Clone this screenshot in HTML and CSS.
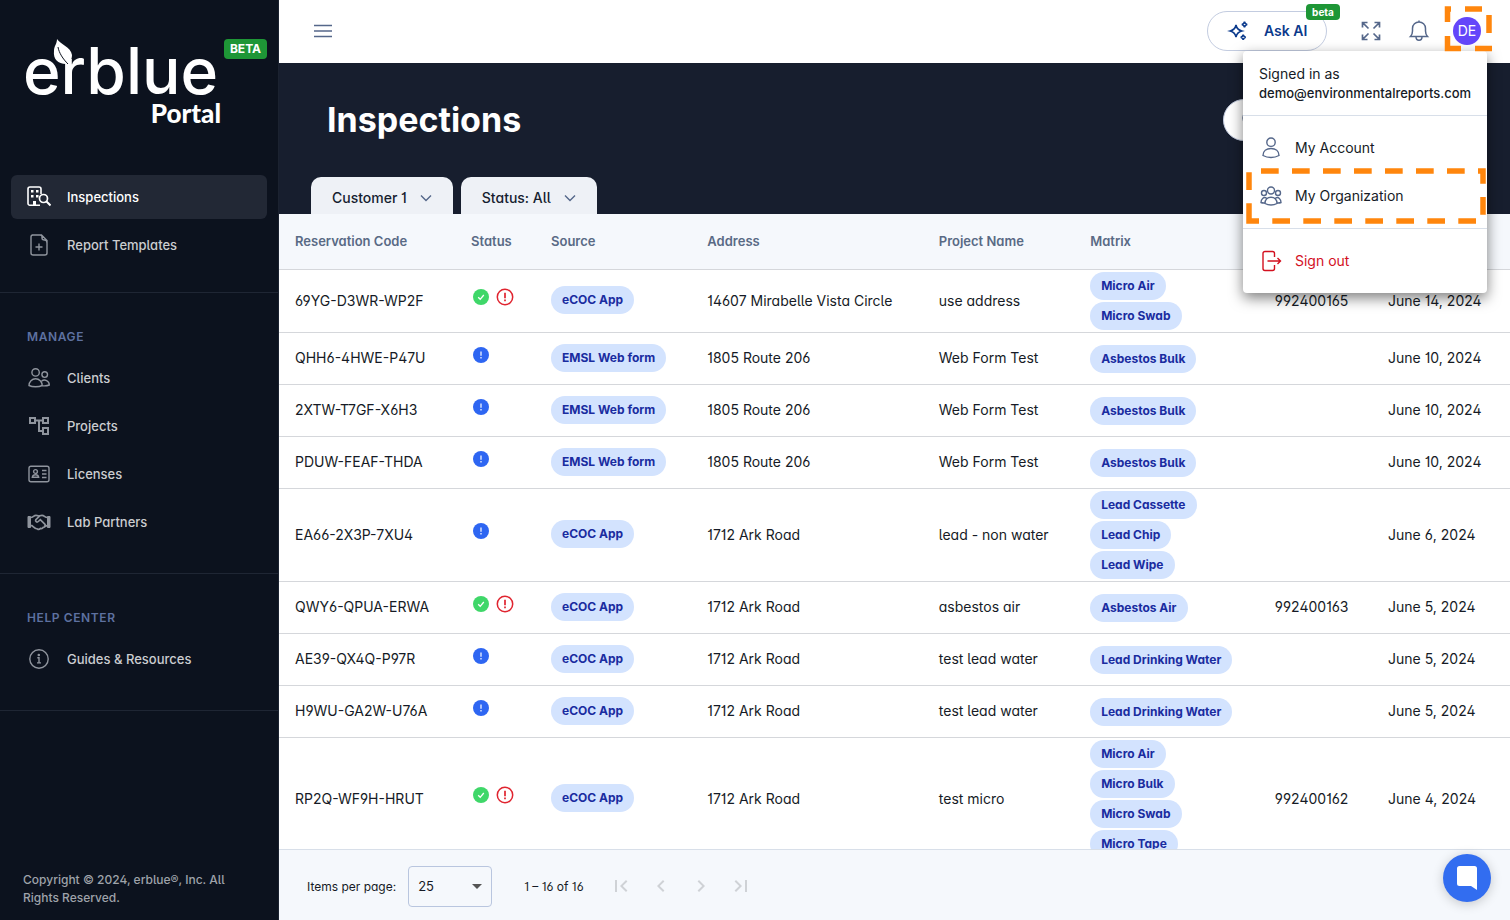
FILE: index.html
```html
<!DOCTYPE html>
<html lang="en">
<head>
<meta charset="utf-8">
<meta name="viewport" content="width=device-width, initial-scale=1">
<title>erblue Portal - Inspections</title>
<link rel="stylesheet" href="styles.css">
</head>
<body>
<div class="app">
  <aside class="sidebar">
    <div class="brand">
      <div class="logo">
        <span class="logo-name">erblue</span>
        <svg class="logo-leaf" viewBox="0 0 22 32" aria-hidden="true"><path d="M4 0C7 5 18 8 19 16c0 3-1 6-3 8l1 6h-2l-2-5C5 25 0 20 1 12 1 7 4 5 4 0z" fill="#fff"/><path d="M5 8c1 6 5 12 10 17" fill="none" stroke="#0c121e" stroke-width="1"/></svg>
        <span class="logo-sub">Portal</span>
      </div>
      <span class="tag tag-brand">BETA</span>
    </div>
    <nav class="nav">
      <div class="nav-group nav-first">
        <a class="nav-item active" href="#"><svg class="icon" viewBox="0 0 24 24"><path d="M13 20.200H3A1.800 1.800 0 0 1 1 18.400V4a2 2 0 0 1 2-2h9a2 2 0 0 1 2 2v5" stroke-width="1.600"/><path d="M4 5h2.500v2.500H4zM9 5h2.500v2.500H9zM4 10h2.500v2.500H4zM9 10h2.500v2.500H9zM6 16h3v4H6z" fill="currentColor" stroke="none"/><circle cx="16.500" cy="13.500" r="4" stroke-width="1.700"/><path d="M19.500 16.500l4 4" stroke-width="2"/></svg>Inspections</a>
        <a class="nav-item" href="#"><svg class="icon" viewBox="0 0 24 24"><path d="M4.500 2h10l5.500 5.500V20a2 2 0 0 1-2 2H6a2 2 0 0 1-2-2V4a2 2 0 0 1 2-2M13 2c2 0 2 1 2 3s1 2 2.500 2 2.500 1 2.500 3M12 10.500v7M8.500 14h7"/></svg>Report Templates</a>
      </div>
      <div class="nav-group">
        <h2 class="nav-title">MANAGE</h2>
        <a class="nav-item" href="#"><svg class="icon" viewBox="0 0 24 24"><circle cx="8.600" cy="6.400" r="3.700"/><circle cx="17.700" cy="8.600" r="2.800"/><path d="M2 19.500c0-4 3-6.700 6.600-6.700s6.600 2.700 6.600 6.700c-2 1-4.500 1.300-6.600 1.300S4 20.500 2 19.500zM14.500 15.200a4.800 4.800 0 0 1 7.800 3.800c-2 .8-4.500 1-7 .7"/></svg>Clients</a>
        <a class="nav-item" href="#"><svg class="icon" viewBox="0 0 24 24"><path d="M3 4h5v5H3zM16 4h5v5h-5zM16 14h5v6h-5zM8 6.500h8M12 6.500V17h4" stroke-width="2"/></svg>Projects</a>
        <a class="nav-item" href="#"><svg class="icon" viewBox="0 0 24 24"><rect x="2" y="4.300" width="20" height="15.500" rx="2"/><circle cx="8.500" cy="9.500" r="1.900"/><path d="M5.300 15.300c.3-2 1.600-2.600 3.200-2.600s2.900.6 3.200 2.600zM15 8.500h4.500M15 12h4.500M15 15.500h4.500"/></svg>Licenses</a>
        <a class="nav-item" href="#"><svg class="icon" viewBox="0 0 24 24"><path d="M1 6.500v11h2.500v-11zM23 6.500v11h-2.500v-11z" fill="currentColor" stroke-width="1"/><path d="M3.500 7.500c3 0 3-2.200 5.500-2.200 1.500 0 2.500.7 3 .7s1.500-.7 3-.7c2.500 0 2.500 2.200 5.500 2.200M3.500 15.700H5c2 1.800 3.500 3.500 5.500 3.300 1 .7 2.200.2 3-.6 1.500.5 2.300-.3 2.800-1.100 1.700 0 1.700-1.600 4.200-1.600M13 5.700l-4.200 4c-.8 1.500 1 3.200 2.500 1.800l2-1.800 4.500 4.500c.8.800.3 2-.8 2.300" stroke-width="1.700"/></svg>Lab Partners</a>
      </div>
      <div class="nav-group">
        <h2 class="nav-title">HELP CENTER</h2>
        <a class="nav-item" href="#"><svg class="icon" viewBox="0 0 24 24"><circle cx="12" cy="12" r="9.200"/><path d="M10.300 10.800H12v5M10 15.900h4"/><circle cx="11.800" cy="8" r=".6" fill="currentColor"/></svg>Guides &amp; Resources</a>
      </div>
    </nav>
    <p class="copyright">Copyright © 2024, erblue®, Inc. All Rights Reserved.</p>
  </aside>

  <main class="main">
    <header class="topbar">
      <button class="icon-btn" aria-label="Toggle navigation"><svg class="icon" viewBox="0 0 24 24"><path d="M3 6.500h18M3 12h18M3 17.500h18"/></svg></button>
      <div class="actions">
        <button class="ask"><svg class="icon ask-icon" viewBox="0 0 24 24"><path d="M9 6c.7 3.500 2 5 5.800 6C11 13 9.700 14.500 9 18c-.7-3.500-2-5-5.800-6C7 11 8.300 9.500 9 6zM17.500 2.700c.3 1.700 1 2.400 2.700 2.800-1.700.4-2.400 1.100-2.700 2.800-.3-1.700-1-2.400-2.700-2.800 1.700-.4 2.400-1.100 2.700-2.800zM16.200 15.700c.3 1.500.9 2.200 2.500 2.600-1.600.4-2.200 1.100-2.500 2.600-.3-1.500-.9-2.200-2.500-2.600 1.600-.4 2.200-1.100 2.500-2.600z"/></svg>Ask AI<span class="tag tag-ask">beta</span></button>
        <button class="icon-btn" aria-label="Full screen"><svg class="icon" viewBox="0 0 24 24"><path d="M3.500 8.500v-5h5M3.500 3.500l6 6M15.500 3.500h5v5M20.500 3.500l-6 6M3.500 15.500v5h5M3.500 20.500l6-6M15.500 20.500h5v-5M20.500 20.500l-6-6" stroke-width="1.700"/></svg></button>
        <button class="icon-btn bell" aria-label="Notifications"><svg class="icon" viewBox="0 0 24 24"><path d="M3.500 17.500c1.500-1.500 2-3 2-5.500V9.500C5.500 5.500 8.500 3 12 3s6.500 2.500 6.500 6.500V12c0 2.500.5 4 2 5.500zM12 3V1.500M9 17.700c0 4.600 6 4.600 6 0" stroke-width="1.500"/></svg></button>
        <div class="account">
          <button class="avatar" aria-label="Account menu">DE</button>
          <svg class="mark mark-avatar" viewBox="0 0 48 48" aria-hidden="true"><path d="M17 43.500H3.500V31M3.500 17V4H7M21 4h17M45 10v18M48 43.500H31"/></svg>
          <div class="menu">
            <div class="menu-user"><span>Signed in as</span><strong>demo@environmentalreports.com</strong></div>
            <div class="menu-group">
              <a class="menu-item" href="#"><svg class="icon" viewBox="0 0 24 24"><circle cx="12" cy="6.200" r="4.200"/><path d="M4 19.500c0-4.500 3.500-7 8-7s8 2.500 8 7c-2.500 1.400-5 2-8 2s-5.500-.6-8-2z"/></svg>My Account</a>
              <a class="menu-item" href="#"><svg class="icon" viewBox="0 0 24 24"><circle cx="12" cy="6.500" r="3.500"/><circle cx="5" cy="9" r="2.500"/><circle cx="19" cy="9" r="2.500"/><path d="M6 19.500c0-4 2.600-6.300 6-6.300s6 2.300 6 6.300c-1.800 1-3.800 1.500-6 1.500s-4.200-.5-6-1.500zM7.500 14C4.500 12.600 2 15 2 18.500c1 .5 2.500.6 4 .5M16.500 14c3-1.400 5.500 1 5.500 4.500-1 .5-2.500.6-4 .5"/></svg>My Organization
                <svg class="mark mark-item" viewBox="0 0 240 58" aria-hidden="true"><path d="M3 54V4h234v50z" stroke-dasharray="17.700 13.300"/></svg></a>
            </div>
            <div class="menu-group">
              <a class="menu-item danger" href="#"><svg class="icon" viewBox="0 0 24 24"><path d="M15.500 8V4.500a2 2 0 0 0-2-2H6a2 2 0 0 0-2 2v15a2 2 0 0 0 2 2h7.500a2 2 0 0 0 2-2V16M8.500 12h13M18.500 9l3 3-3 3"/></svg>Sign out</a>
            </div>
          </div>
        </div>
      </div>
    </header>

    <section class="hero">
      <div class="hero-row">
        <h1>Inspections</h1>
        <label class="search"><svg class="icon" viewBox="0 0 24 24"><circle cx="10" cy="10" r="7"/><path d="M15 15l6 6"/></svg><input type="search" aria-label="Search inspections"></label>
      </div>
      <div class="tabs">
        <button class="tab">Customer 1<svg class="chev" viewBox="0 0 12 8"><path d="M1 1.500l5 5 5-5"/></svg></button>
        <button class="tab">Status: All<svg class="chev" viewBox="0 0 12 8"><path d="M1 1.500l5 5 5-5"/></svg></button>
      </div>
    </section>

    <svg class="defs" aria-hidden="true">
      <symbol id="ok" viewBox="0 0 20 20"><circle cx="10" cy="10" r="8" fill="#3fd769"/><path d="M7.200 10.300l2 2 3.600-4.300" fill="none" stroke="#fff" stroke-width="1.300"/></symbol>
      <symbol id="warn" viewBox="0 0 20 20"><circle cx="10" cy="10" r="7.700" fill="none" stroke="#e0242f" stroke-width="1.500"/><path d="M10 5.800v5.400M10 12.500v1.800" stroke="#e0242f" stroke-width="1.700"/></symbol>
      <symbol id="info" viewBox="0 0 20 20"><circle cx="10" cy="10" r="8" fill="#2e66f2"/><path d="M10 6.500v4.200M10 12v1.400" stroke="#fff" stroke-width="1.200"/></symbol>
    </svg>
    <div class="table-wrap">
      <table>
        <colgroup><col class="c-code"><col class="c-status"><col class="c-source"><col class="c-address"><col class="c-project"><col class="c-matrix"><col class="c-order"><col></colgroup>
        <thead><tr><th>Reservation Code</th><th>Status</th><th>Source</th><th>Address</th><th>Project Name</th><th>Matrix</th><th></th><th></th></tr></thead>
        <tbody>
          <tr><td>69YG-D3WR-WP2F</td><td><span class="status"><svg><use href="#ok"/></svg><svg><use href="#warn"/></svg></span></td><td><span class="chip">eCOC App</span></td><td>14607 Mirabelle Vista Circle</td><td>use address</td><td><div class="chips"><span class="chip">Micro Air</span><span class="chip">Micro Swab</span></div></td><td>992400165</td><td>June 14, 2024</td></tr>
          <tr><td>QHH6-4HWE-P47U</td><td><span class="status"><svg><use href="#info"/></svg></span></td><td><span class="chip">EMSL Web form</span></td><td>1805 Route 206</td><td>Web Form Test</td><td><div class="chips"><span class="chip">Asbestos Bulk</span></div></td><td></td><td>June 10, 2024</td></tr>
          <tr><td>2XTW-T7GF-X6H3</td><td><span class="status"><svg><use href="#info"/></svg></span></td><td><span class="chip">EMSL Web form</span></td><td>1805 Route 206</td><td>Web Form Test</td><td><div class="chips"><span class="chip">Asbestos Bulk</span></div></td><td></td><td>June 10, 2024</td></tr>
          <tr><td>PDUW-FEAF-THDA</td><td><span class="status"><svg><use href="#info"/></svg></span></td><td><span class="chip">EMSL Web form</span></td><td>1805 Route 206</td><td>Web Form Test</td><td><div class="chips"><span class="chip">Asbestos Bulk</span></div></td><td></td><td>June 10, 2024</td></tr>
          <tr><td>EA66-2X3P-7XU4</td><td><span class="status"><svg><use href="#info"/></svg></span></td><td><span class="chip">eCOC App</span></td><td>1712 Ark Road</td><td>lead - non water</td><td><div class="chips"><span class="chip">Lead Cassette</span><span class="chip">Lead Chip</span><span class="chip">Lead Wipe</span></div></td><td></td><td>June 6, 2024</td></tr>
          <tr><td>QWY6-QPUA-ERWA</td><td><span class="status"><svg><use href="#ok"/></svg><svg><use href="#warn"/></svg></span></td><td><span class="chip">eCOC App</span></td><td>1712 Ark Road</td><td>asbestos air</td><td><div class="chips"><span class="chip">Asbestos Air</span></div></td><td>992400163</td><td>June 5, 2024</td></tr>
          <tr><td>AE39-QX4Q-P97R</td><td><span class="status"><svg><use href="#info"/></svg></span></td><td><span class="chip">eCOC App</span></td><td>1712 Ark Road</td><td>test lead water</td><td><div class="chips"><span class="chip">Lead Drinking Water</span></div></td><td></td><td>June 5, 2024</td></tr>
          <tr><td>H9WU-GA2W-U76A</td><td><span class="status"><svg><use href="#info"/></svg></span></td><td><span class="chip">eCOC App</span></td><td>1712 Ark Road</td><td>test lead water</td><td><div class="chips"><span class="chip">Lead Drinking Water</span></div></td><td></td><td>June 5, 2024</td></tr>
          <tr><td>RP2Q-WF9H-HRUT</td><td><span class="status"><svg><use href="#ok"/></svg><svg><use href="#warn"/></svg></span></td><td><span class="chip">eCOC App</span></td><td>1712 Ark Road</td><td>test micro</td><td><div class="chips"><span class="chip">Micro Air</span><span class="chip">Micro Bulk</span><span class="chip">Micro Swab</span><span class="chip">Micro Tape</span></div></td><td>992400162</td><td>June 4, 2024</td></tr>
        </tbody>
      </table>
    </div>

    <footer class="pager">
      <label for="size">Items per page:</label>
      <div class="select"><select id="size"><option>25</option><option>50</option></select><svg class="caret" viewBox="0 0 10 5" aria-hidden="true"><path d="M0 0h10L5 5z"/></svg></div>
      <span class="range">1 – 16 of 16</span>
      <div class="pages">
        <button disabled aria-label="First page"><svg viewBox="0 0 24 24"><path d="M18.400 16.600L13.800 12l4.600-4.600L17 6l-6 6 6 6zM6 6h2v12H6z"/></svg></button>
        <button disabled aria-label="Previous page"><svg viewBox="0 0 24 24"><path d="M15.400 7.400L14 6l-6 6 6 6 1.400-1.400L10.800 12z"/></svg></button>
        <button disabled aria-label="Next page"><svg viewBox="0 0 24 24"><path d="M10 6L8.600 7.400l4.600 4.600-4.600 4.600L10 18l6-6z"/></svg></button>
        <button disabled aria-label="Last page"><svg viewBox="0 0 24 24"><path d="M5.600 7.400l4.600 4.600-4.600 4.600L7 18l6-6-6-6zM16 6h2v12h-2z"/></svg></button>
      </div>
    </footer>
  </main>
  <button class="chat" aria-label="Open chat"><svg viewBox="0 0 22 26"><path d="M3.500 1h15A2.500 2.500 0 0 1 21 3.500V25l-6-4H3.500A2.500 2.500 0 0 1 1 18.500v-15A2.500 2.500 0 0 1 3.500 1z"/></svg></button>
</div>
</body>
</html>
```
FILE: styles.css
```css
* { box-sizing: border-box; }
body {
  margin: 0;
  font-family: Inter, "Liberation Sans", sans-serif;
  font-size: 14px;
  color: #161b26;
  font-feature-settings: "cv01", "cv02", "cv03", "cv04", "cv05", "cv11";
}
button, input, select { font: inherit; font-feature-settings: inherit; color: inherit; }
button { border: 0; padding: 0; background: none; cursor: pointer; }
a { color: inherit; text-decoration: none; }
.app { display: flex; height: 100vh; overflow: hidden; }
.icon { width: 24px; height: 24px; flex: none; fill: none; stroke: currentColor; stroke-width: 1.4; }
.tag { background: #1e9636; color: #fff; font-weight: 700; border-radius: 4px; text-align: center; }

/* Sidebar */
.sidebar { width: 279px; flex: none; display: flex; flex-direction: column; background: #0c121e; border-right: 1px solid #1b2230; color: #cbcdd0; }
.brand { display: flex; align-items: flex-start; gap: 3px; height: 175px; padding: 39px 11px 0 23px; color: #fff; font-feature-settings: normal; }
.logo { position: relative; display: flex; flex-direction: column; width: 198px; }
.logo-name { font-size: 64px; font-weight: 500; line-height: 64px; }
.logo-leaf { position: absolute; left: 30px; top: 0; width: 22px; height: 32px; }
.logo-sub { align-self: flex-end; margin-top: -4px; font: 900 26px/28px Lato, sans-serif; }
.tag-brand { flex: none; width: 43px; font-size: 12px; line-height: 20px; }
.nav-group { padding: 34px 11px 29px; border-bottom: 1px solid #1f2634; }
.nav-first { padding: 0 11px 25px; }
.nav-title { margin: 0 0 9px; padding-left: 16px; font-size: 12px; font-weight: 600; line-height: 20px; letter-spacing: 0.05em; color: #5e71a0; }
.nav-item { display: flex; align-items: center; gap: 16px; height: 44px; padding: 0 16px; border-radius: 6px; font-size: 13px; font-weight: 500; }
.nav-item + .nav-item { margin-top: 4px; }
.nav-item .icon { color: #8f949d; }
.nav-item.active { background: #222835; color: #fff; }
.nav-item.active .icon { color: #fff; }
.copyright { margin: auto 40px 13px 23px; font-size: 12px; font-weight: 500; line-height: 18px; color: #9fa3aa; }

/* Top bar */
.main { flex: 1; min-width: 0; display: flex; flex-direction: column; background: #fff; }
.topbar { display: flex; align-items: center; justify-content: space-between; height: 63px; flex: none; padding: 0 29px 2px 32px; color: #55678a; }
.actions { display: flex; align-items: center; gap: 24px; font-feature-settings: normal; }
.icon-btn { display: flex; }
.bell { margin-right: -2px; }
.ask { position: relative; display: flex; align-items: center; gap: 13px; width: 120px; height: 40px; margin-right: 8px; padding-left: 19px; border: 1px solid #c3cce0; border-radius: 20px; color: #0b3a8c; font-weight: 600; }
.ask-icon { stroke-width: 1.6; }
.tag-ask { position: absolute; right: -14px; top: -8px; width: 34px; font-size: 10px; line-height: 16px; }
.account { position: relative; display: flex; }
.avatar { width: 28px; height: 28px; border-radius: 50%; background: #6446fa; color: #fff; }
.mark { position: absolute; fill: none; stroke: #ff860d; stroke-width: 5.500; pointer-events: none; }
.mark-avatar { left: -9px; top: -12px; width: 48px; height: 48px; z-index: 4; }
.mark-item { left: 3px; top: -5px; width: 240px; height: 58px; }
.menu { position: absolute; right: -6px; top: 34px; z-index: 3; width: 244px; border-radius: 4px; background: #fff; color: #161b26; box-shadow: 0 5px 14px rgba(0, 0, 0, 0.5); }
.menu-user { display: flex; flex-direction: column; height: 64px; padding: 13px 16px 0; line-height: 20px; }
.menu-user strong { font-size: 13px; font-weight: 500; line-height: 19px; }
.menu-group { border-top: 1px solid #d8dfe9; padding: 8px 0; }
.menu-item { position: relative; display: flex; align-items: center; gap: 12px; height: 48px; padding: 0 16px; }
.menu-item .icon { color: #55678a; }
.menu-item.danger, .menu-item.danger .icon { color: #d3101f; }

/* Page heading */
.hero { flex: none; height: 151px; display: flex; flex-direction: column; justify-content: space-between; padding: 36px 32px 0; background: #171e2e; }
.hero-row { display: flex; align-items: center; justify-content: space-between; padding-left: 16px; }
h1 { margin: 0; font-size: 34px; line-height: 42px; font-weight: 700; color: #fff; }
.search { display: flex; align-items: center; width: 255px; height: 42px; padding: 0 16px; border: 1px solid #c3cce0; border-radius: 21px; background: #fff; color: #55678a; }
.search input { flex: 1; min-width: 0; border: 0; outline: 0; background: none; }
.tabs { display: flex; gap: 8px; }
.tab { display: flex; align-items: center; gap: 13px; height: 37px; padding: 4px 21px 0; border-radius: 10px 10px 0 0; background: #eef1f6; font-weight: 500; color: #161e30; }
.chev { width: 12px; height: 8px; fill: none; stroke: #55678a; stroke-width: 1.4; }

/* Table */
.defs { position: absolute; width: 0; height: 0; }
.table-wrap { flex: 1; min-height: 0; overflow: hidden; }
table { width: 100%; table-layout: fixed; border-collapse: separate; border-spacing: 0; }
.c-code { width: 15.6%; }
.c-status { width: 6.5%; }
.c-source { width: 12.7%; }
.c-address { width: 18.8%; }
.c-project { width: 12.3%; }
.c-matrix { width: 15%; }
.c-order { width: 9.2%; }
th, td { padding: 0 0 2px; text-align: left; white-space: nowrap; border-bottom: 1px solid #d5d7db; }
th:first-child, td:first-child { padding-left: 16px; }
th { height: 56px; background: #f5f8fc; font-size: 13px; font-weight: 600; color: #596a85; }
td { height: 52px; }
.status { display: flex; gap: 4px; margin-bottom: 6px; }
.status svg { width: 20px; height: 20px; }
.chips { display: flex; flex-direction: column; align-items: flex-start; gap: 2px; padding-top: 2px; }
.chip { display: inline-block; padding: 0 11px; border-radius: 14px; background: #d3e3fe; color: #1a2ca0; font-size: 12px; font-weight: 700; line-height: 28px; }

/* Paginator */
.pager { flex: none; display: flex; align-items: center; height: 71px; padding: 2px 28px 0; border-top: 1px solid #d8dfe9; background: #f5f8fc; font-size: 12px; }
.select { position: relative; display: flex; align-items: center; margin: 0 32px 0 12px; }
.select select { width: 84px; height: 41px; padding: 0 9px; border: 1px solid #b9c6df; border-radius: 4px; background: none; appearance: none; font-size: 13px; }
.caret { position: absolute; right: 10px; width: 10px; height: 5px; fill: #555; pointer-events: none; }
.pages { display: flex; margin-left: 17px; }
.pages button { display: flex; align-items: center; justify-content: center; width: 40px; height: 40px; }
.pages svg { width: 24px; height: 24px; fill: #cfd2d6; }
.chat { position: absolute; right: 19px; bottom: 18px; display: flex; align-items: center; justify-content: center; width: 48px; height: 48px; border-radius: 50%; background: #326df0; box-shadow: 0 2px 12px rgba(0, 0, 0, 0.2); }
.chat svg { width: 22px; height: 26px; fill: #fff; }
```
